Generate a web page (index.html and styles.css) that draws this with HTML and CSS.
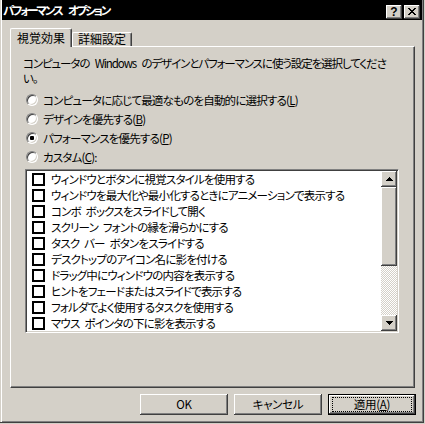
FILE: index.html
```html
<!DOCTYPE html>
<html lang="ja">
<head>
<meta charset="utf-8">
<title>パフォーマンス オプション</title>
<link rel="stylesheet" href="styles.css">
</head>
<body>
<div class="window">
  <div class="titlebar">
    <span class="title">パフォーマンス オプション</span>
    <div class="tbtns">
      <span class="tbtn help">?</span>
      <span class="tbtn close"><svg width="8" height="7" viewBox="0 0 8 7"><path d="M0 0h2v1h-2zM6 0h2v1h-2zM1 1h2v1h-2zM5 1h2v1h-2zM2 2h4v1h-4zM3 3h2v1h-2zM2 4h4v1h-4zM1 5h2v1h-2zM5 5h2v1h-2zM0 6h2v1h-2zM6 6h2v1h-2z" fill="#000"/></svg></span>
    </div>
  </div>
  <div class="main">
    <div class="tabs">
      <div class="tab active">視覚効果</div>
      <div class="tab">詳細設定</div>
    </div>
    <div class="panel">
      <p class="desc">コンピュータの Windows のデザインとパフォーマンスに使う設定を選択してくださ<br>い。</p>
      <div class="radios">
        <div class="radio-row"><span class="radio"></span><span>コンピュータに応じて最適なものを自動的に選択する(<u>L</u>)</span></div>
        <div class="radio-row"><span class="radio"></span><span>デザインを優先する(<u>B</u>)</span></div>
        <div class="radio-row"><span class="radio checked"></span><span>パフォーマンスを優先する(<u>P</u>)</span></div>
        <div class="radio-row"><span class="radio"></span><span>カスタム(<u>C</u>):</span></div>
      </div>
      <div class="listbox">
        <div class="items">
          <div class="item"><span class="cb"></span>ウィンドウとボタンに視覚スタイルを使用する</div>
          <div class="item"><span class="cb"></span>ウィンドウを最大化や最小化するときにアニメーションで表示する</div>
          <div class="item"><span class="cb"></span>コンボ ボックスをスライドして開く</div>
          <div class="item"><span class="cb"></span>スクリーン フォントの縁を滑らかにする</div>
          <div class="item"><span class="cb"></span>タスク バー ボタンをスライドする</div>
          <div class="item"><span class="cb"></span>デスクトップのアイコン名に影を付ける</div>
          <div class="item"><span class="cb"></span>ドラッグ中にウィンドウの内容を表示する</div>
          <div class="item"><span class="cb"></span>ヒントをフェードまたはスライドで表示する</div>
          <div class="item"><span class="cb"></span>フォルダでよく使用するタスクを使用する</div>
          <div class="item"><span class="cb"></span>マウス ポインタの下に影を表示する</div>
        </div>
        <div class="scrollbar">
          <div class="sbtn"><svg width="7" height="4" viewBox="0 0 7 4"><path d="M3 0h1v1h1v1h1v1h1v1h-7v-1h1v-1h1v-1h1z" fill="#000"/></svg></div>
          <div class="thumb"></div>
          <div class="track"></div>
          <div class="sbtn"><svg width="7" height="4" viewBox="0 0 7 4"><path d="M0 0h7v1h-1v1h-1v1h-1v1h-1v-1h-1v-1h-1v-1h-1z" fill="#000"/></svg></div>
        </div>
      </div>
    </div>
    <div class="buttons">
      <div class="btn">OK</div>
      <div class="btn">キャンセル</div>
      <div class="btn default"><span class="focus">適用(<u>A</u>)</span></div>
    </div>
  </div>
</div>
</body>
</html>
```
FILE: styles.css
```css
* { box-sizing: border-box; }
html, body { margin: 0; padding: 0; }
body {
  background: #d4d0c8;
  font-family: "Noto Sans CJK JP", sans-serif;
  font-size: 11.5px;
  letter-spacing: -0.8px;
  word-spacing: 3px;
  color: #000;
  font-feature-settings: "palt" 1;
}
.window {
  width: 424px;
  height: 423px;
  background: #d4d0c8;
  border-right: 1px solid #404040;
  border-bottom: 1px solid #404040;
  box-shadow: inset 1px 0 #d4d0c8, inset 2px 0 #fff, inset -1px -1px #808080;
  padding: 0 1px 1px 2px;
  display: flex;
  flex-direction: column;
}
.titlebar {
  height: 20px;
  background: #000;
  display: flex;
  justify-content: space-between;
  align-items: flex-start;
  padding: 0 2px 0 1px;
}
.title {
  color: #fff;
  font-weight: bold;
  font-size: 11.5px;
  line-height: 20px;
  letter-spacing: -2.2px;
  word-spacing: 6px;
}
.tbtns { display: flex; gap: 2px; margin-top: 5px; }
.tbtn {
  width: 16px;
  height: 14px;
  background: #d4d0c8;
  box-shadow: inset -1px -1px #404040, inset 1px 1px #fff, inset -2px -2px #808080;
  display: flex;
  align-items: center;
  justify-content: center;
  letter-spacing: 0;
}
.tbtn.help {
  font-family: "Liberation Sans", sans-serif;
  font-weight: bold;
  font-size: 12px;
  line-height: 14px;
  padding-bottom: 1px;
}
.tbtn.close svg { margin-top: -1px; }
.main {
  flex: 1;
  padding: 8px 7px 0 8px;
  display: flex;
  flex-direction: column;
}
.tabs {
  display: flex;
  align-items: flex-end;
  height: 18px;
  position: relative;
  z-index: 1;
}
.tab {
  height: 14px;
  width: 60px;
  text-align: center;
  font-size: 12px;
  letter-spacing: 0;
  line-height: 12px;
  border: 1px solid;
  border-color: #fff #404040 transparent #fff;
  border-bottom: none;
  border-radius: 2px 2px 0 0;
  box-shadow: inset -1px 0 #808080;
  background: #d4d0c8;
}
.tab.active {
  width: 62px;
  height: 19px;
  margin-bottom: -1px;
  padding-top: 1px;
  line-height: 15px;
}
.panel {
  height: 342px;
  border: 1px solid;
  border-color: #fff #404040 #404040 #fff;
  box-shadow: inset -1px -1px #808080;
  padding: 9px 0 0 12px;
}
.desc {
  margin: 0;
  line-height: 15px;
  white-space: nowrap;
  letter-spacing: -1.1px;
  word-spacing: 4px;
}
.radios { margin-top: 4px; }
.radio-row {
  height: 19px;
  display: flex;
  align-items: center;
  gap: 5px;
  padding-left: 3px;
  white-space: nowrap;
}
.radio {
  width: 12px;
  height: 12px;
  border-radius: 50%;
  background: #fff;
  border: 1px solid;
  border-color: #808080 #fff #fff #808080;
  box-shadow: inset 1px 1px #404040, inset -1px -1px #d4d0c8;
  display: flex;
  align-items: center;
  justify-content: center;
  flex: none;
}
.radio.checked::after {
  content: "";
  width: 4px;
  height: 4px;
  border-radius: 1px;
  background: #000;
}
.listbox {
  margin: 3px 0 0 2px;
  width: 374px;
  height: 164px;
  border: 1px solid;
  border-color: #808080 #fff #fff #808080;
  box-shadow: inset 1px 1px #404040, inset -1px -1px #d4d0c8;
  padding: 1px;
  background: #fff;
  display: flex;
}
.items {
  flex: 1;
  padding-top: 0;
  overflow: hidden;
}
.item {
  height: 16px;
  line-height: 16px;
  display: flex;
  align-items: center;
  padding-left: 5px;
  white-space: pre;
}
.cb {
  width: 13px;
  height: 13px;
  border: 2px solid #000;
  background: #fff;
  margin-right: 6px;
  flex: none;
}
.scrollbar {
  width: 16px;
  display: flex;
  flex-direction: column;
}
.sbtn, .thumb {
  background: #d4d0c8;
  box-shadow: inset -1px -1px #404040, inset 1px 1px #fff, inset -2px -2px #808080;
}
.sbtn {
  height: 16px;
  display: flex;
  align-items: center;
  justify-content: center;
  flex: none;
}
.thumb { height: 79px; flex: none; }
.track {
  flex: 1;
  background: repeating-conic-gradient(#fff 0 25%, #d4d0c8 0 50%) 0 0 / 2px 2px;
}
.buttons {
  display: flex;
  justify-content: flex-end;
  gap: 6px;
  margin: 6px -1px 0 0;
}
.btn {
  width: 88px;
  height: 21px;
  display: flex;
  align-items: center;
  justify-content: center;
  box-shadow: inset -1px -1px #404040, inset 1px 1px #fff, inset -2px -2px #808080;
  line-height: 15px;
  letter-spacing: -0.3px;
}
.btn.default {
  border: 1px solid #000;
}
.focus {
  outline: 1px dotted #000;
  width: 78px;
  height: 13px;
  display: flex;
  align-items: center;
  justify-content: center;
}
```
